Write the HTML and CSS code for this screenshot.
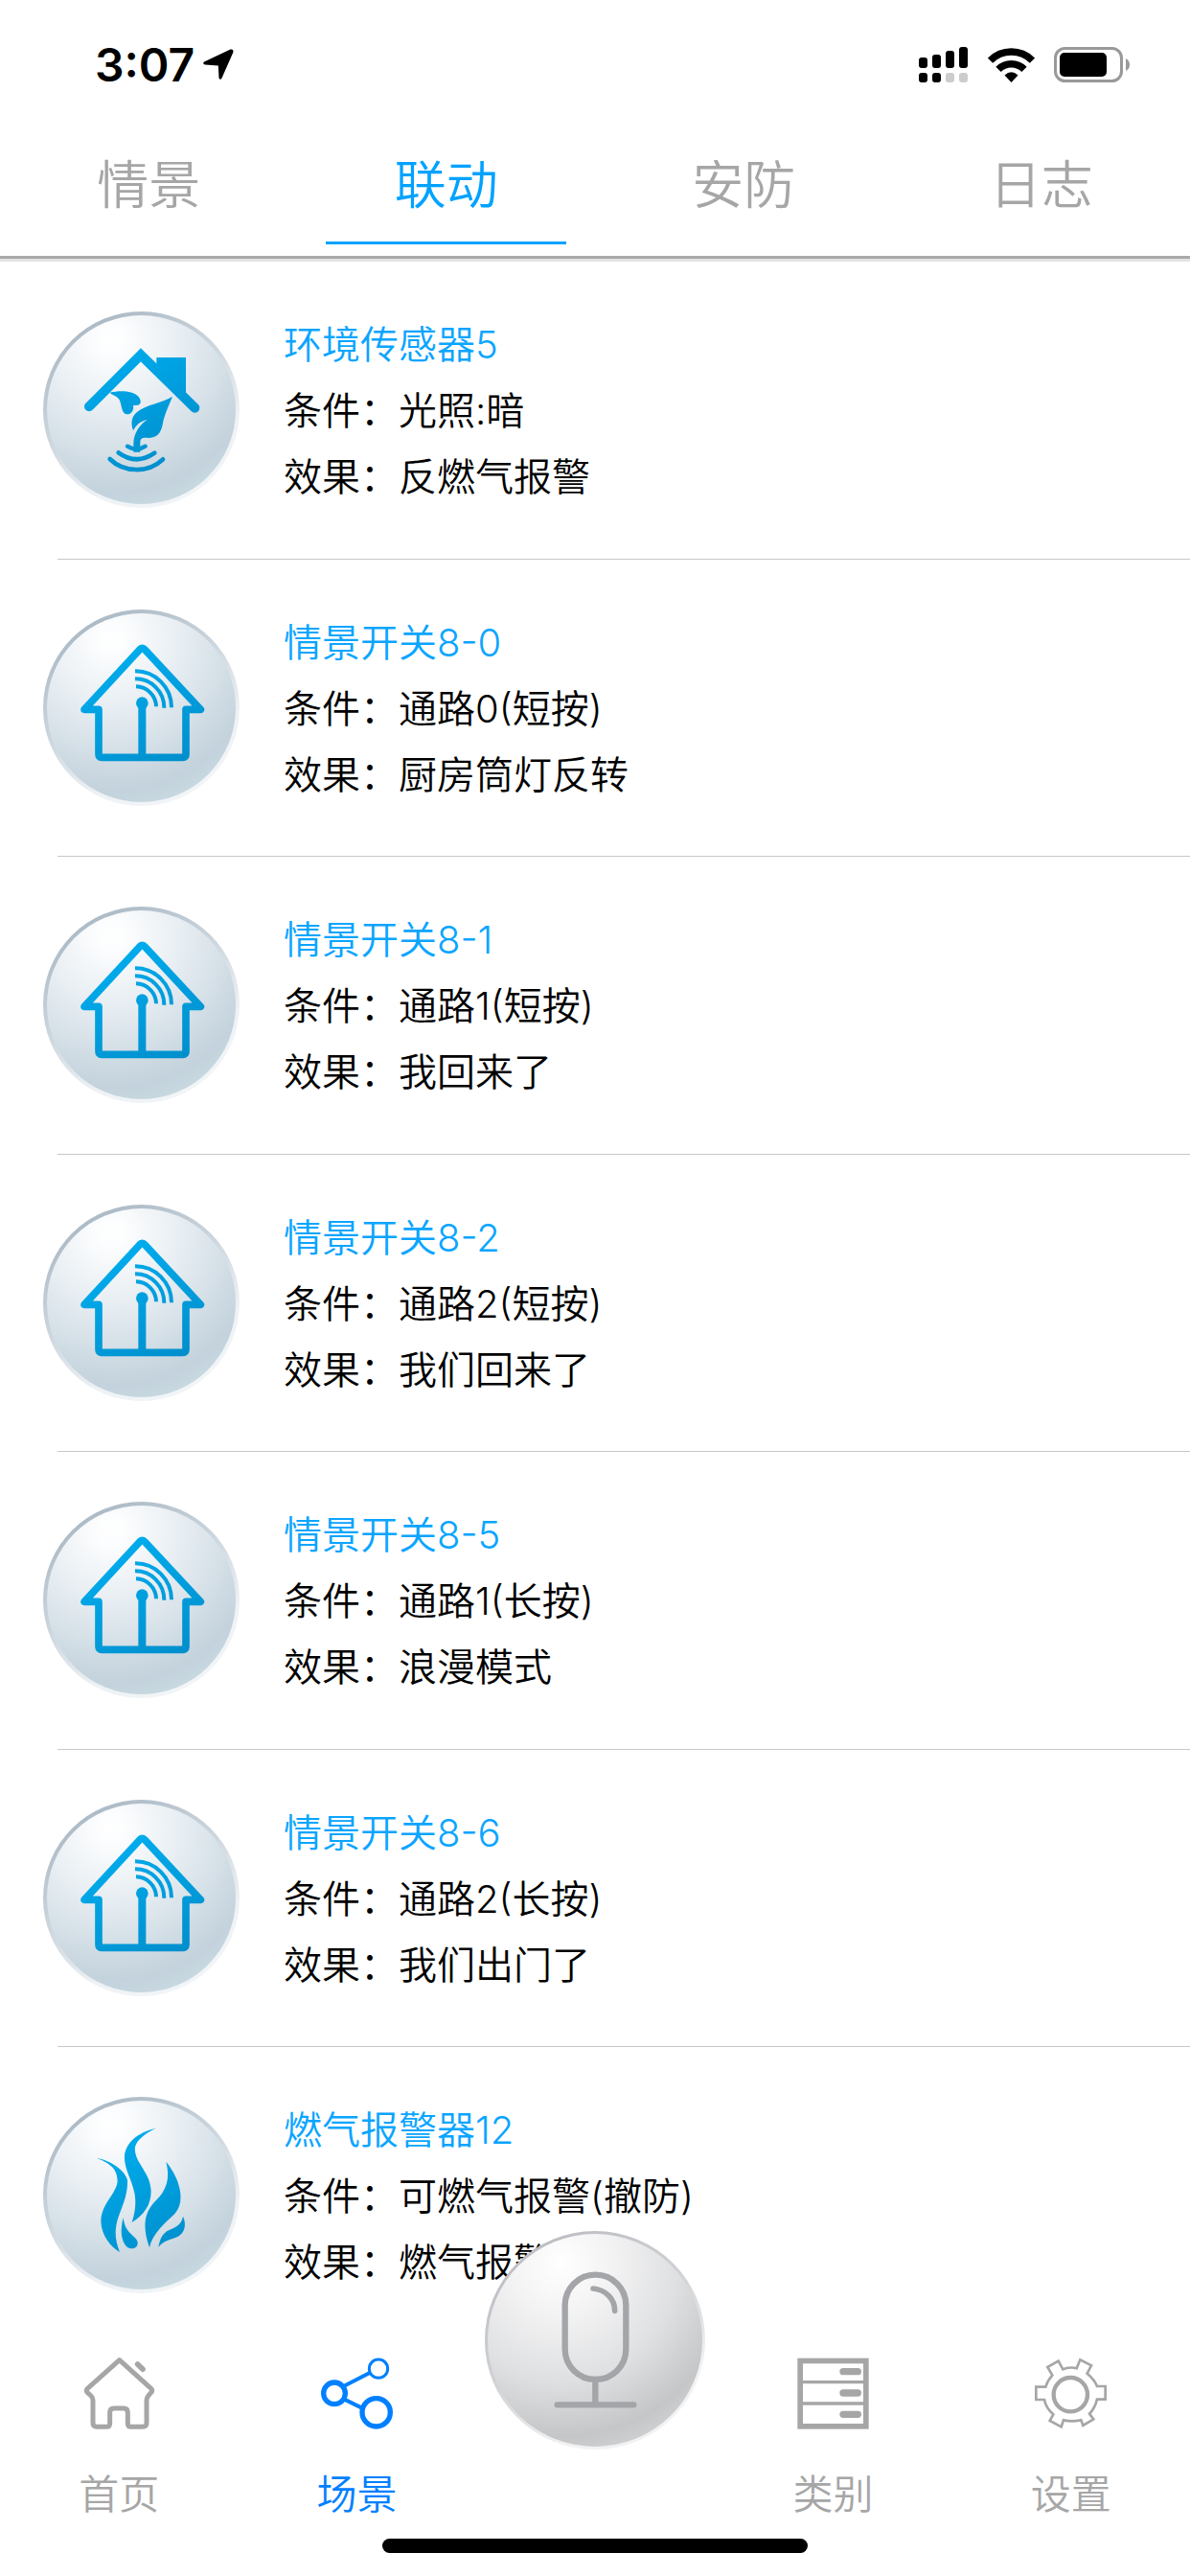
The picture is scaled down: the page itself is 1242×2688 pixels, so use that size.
FILE: index.html
```html
<!DOCTYPE html>
<html lang="zh-CN">
<head>
    <meta charset="UTF-8">
    <meta name="viewport" content="width=device-width, initial-scale=1.0">
    <title>场景</title>
    <link rel="stylesheet" href="styles.css">
</head>
<body>
    <!-- shared icons -->
    <svg class="defs" aria-hidden="true">
        <defs>
            <linearGradient id="blue" gradientUnits="userSpaceOnUse" x1="240" y1="180" x2="440" y2="540">
                <stop offset="0" stop-color="#00aeef"/>
                <stop offset="1" stop-color="#008fcd"/>
            </linearGradient>
        </defs>
        <symbol id="icon-sensor" viewBox="46 75 615 615">
            <g fill="none" stroke="url(#blue)" stroke-linecap="round">
                <path d="M190 373L352 211L521 377" stroke-width="30"/>
                <path d="M310 497Q338 515 366 497" stroke-width="13"/>
                <path d="M282 517Q338 558 395 518" stroke-width="14"/>
                <path d="M255 537C300 581 376 581 421 538" stroke-width="14"/>
            </g>
            <g fill="url(#blue)">
                <path d="M401 219H493V349L401 259Z"/>
                <path d="M255 329C285 322 326 322 345 342C359 361 348 373 328 368C332 385 320 398 308 397C291 395 293 370 285 352C279 339 262 337 255 329Z"/>
                <path d="M451 341C420 362 370 365 340 390C322 405 320 425 328 448C337 429 352 418 372 413C348 430 330 455 329 488V515H350V482C351 471 359 468 375 471C402 471 414 458 420 430C424 400 440 370 451 341Z"/>
            </g>
        </symbol>
        <symbol id="icon-switch" viewBox="46 45 615 615">
            <g fill="none" stroke="url(#blue)">
                <path d="M220 358H175L348 171Q356 161 365 171L539 358H493V498Q493 508 483 508H230Q220 508 220 498Z" stroke-width="23" stroke-linejoin="round"/>
                <path d="M356 338V508" stroke-width="24"/>
                <path d="M337 286A64 64 0 0 1 400 349" stroke-width="12"/>
                <path d="M334 262A90 90 0 0 1 425 353" stroke-width="12"/>
                <path d="M334 238A113 113 0 0 1 448 352" stroke-width="12"/>
            </g>
            <circle cx="356" cy="338" r="19" fill="url(#blue)"/>
        </symbol>
        <symbol id="icon-fire" viewBox="47 55 615 615">
            <g fill="url(#blue)">
                <path d="M400 154C340 166 299 205 302 250C306 310 358 348 325 448C362 425 385 395 385 350C384 290 330 260 335 212C341 188 370 168 400 154Z"/>
                <path d="M216 247C250 262 280 275 280 320C276 360 228 390 228 445C230 492 260 525 287 541C270 500 270 465 285 425C299 387 312 360 311 315C300 275 240 250 216 247Z"/>
                <path d="M298 433C288 470 290 507 310 525C329 537 345 525 343 510C340 490 303 485 298 433Z"/>
                <path d="M432 258C445 310 435 345 400 380C364 415 356 460 380 527C390 480 430 450 460 420C485 390 480 350 465 312C454 287 443 272 432 258Z"/>
                <path d="M485 429C480 460 455 465 435 475C415 490 413 505 408 525C430 500 450 502 470 492C490 480 497 455 485 429Z"/>
            </g>
        </symbol>
    </svg>

    <div class="app">
        <header class="header">
            <div class="status">
                <div class="clock">
                    <span>3:07</span>
                    <svg width="33" height="33" viewBox="0 0 33 33"><path d="M29.500.6Q33 0 32.400 3.500L20.500 30.500Q19 33 17.500 30.500L16.800 17.500L3 16.600Q0 15.500 2 13.500Z"/></svg>
                </div>
                <div class="system">
                    <svg width="52" height="38" viewBox="0 0 52 38">
                        <rect x="0" y="11" width="9" height="11" rx="3"/>
                        <rect x="14" y="8" width="9" height="14" rx="3"/>
                        <rect x="28" y="4" width="9" height="18" rx="3"/>
                        <rect x="42" y="0" width="9" height="22" rx="3"/>
                        <rect x="0" y="27" width="9" height="10" rx="3"/>
                        <rect x="14" y="27" width="9" height="10" rx="3"/>
                        <rect x="28" y="27" width="9" height="10" rx="3" fill="#ccc"/>
                        <rect x="42" y="27" width="9" height="10" rx="3" fill="#ccc"/>
                    </svg>
                    <svg width="49" height="36" viewBox="0 0 49 36">
                        <g fill="none" stroke="#000">
                            <path d="M2.500 13.200A31 31 0 0 1 46.500 13.200" stroke-width="7.500"/>
                            <path d="M11 22.300A19 19 0 0 1 38 22.300" stroke-width="7.500"/>
                        </g>
                        <path d="M24.500 36L17.500 28.500Q24.500 22 31.500 28.500Z"/>
                    </svg>
                    <svg width="80" height="38" viewBox="0 0 80 38">
                        <rect x="1.500" y="1.500" width="69" height="34" rx="10" fill="none" stroke="#999" stroke-width="3"/>
                        <rect x="6" y="6" width="49" height="25" rx="5"/>
                        <path d="M75 12Q79 14 79 18.500Q79 23 75 25Z" fill="#999"/>
                    </svg>
                </div>
            </div>
            <nav class="tabs">
                <a href="#">情景</a>
                <a href="#" class="active">联动</a>
                <a href="#">安防</a>
                <a href="#">日志</a>
            </nav>
        </header>

        <ul class="list">
            <li>
                <div class="ball"><svg><use href="#icon-sensor"/></svg></div>
                <div class="info">
                    <h2>环境传感器5</h2>
                    <p>条件：光照:暗</p>
                    <p>效果：反燃气报警</p>
                </div>
            </li>
            <li>
                <div class="ball"><svg><use href="#icon-switch"/></svg></div>
                <div class="info">
                    <h2>情景开关8-0</h2>
                    <p>条件：通路0(短按)</p>
                    <p>效果：厨房筒灯反转</p>
                </div>
            </li>
            <li>
                <div class="ball"><svg><use href="#icon-switch"/></svg></div>
                <div class="info">
                    <h2>情景开关8-1</h2>
                    <p>条件：通路1(短按)</p>
                    <p>效果：我回来了</p>
                </div>
            </li>
            <li>
                <div class="ball"><svg><use href="#icon-switch"/></svg></div>
                <div class="info">
                    <h2>情景开关8-2</h2>
                    <p>条件：通路2(短按)</p>
                    <p>效果：我们回来了</p>
                </div>
            </li>
            <li>
                <div class="ball"><svg><use href="#icon-switch"/></svg></div>
                <div class="info">
                    <h2>情景开关8-5</h2>
                    <p>条件：通路1(长按)</p>
                    <p>效果：浪漫模式</p>
                </div>
            </li>
            <li>
                <div class="ball"><svg><use href="#icon-switch"/></svg></div>
                <div class="info">
                    <h2>情景开关8-6</h2>
                    <p>条件：通路2(长按)</p>
                    <p>效果：我们出门了</p>
                </div>
            </li>
            <li>
                <div class="ball"><svg><use href="#icon-fire"/></svg></div>
                <div class="info">
                    <h2>燃气报警器12</h2>
                    <p>条件：可燃气报警(撤防)</p>
                    <p>效果：燃气报警</p>
                </div>
            </li>
        </ul>

        <footer class="footer">
            <nav class="menu">
                <a href="#">
                    <svg viewBox="258 180 225 225" fill="none" stroke="#a6a6a6" stroke-width="15" stroke-linejoin="round" stroke-linecap="round">
                        <path d="M371 188L271 277Q265 283 271 290L282 300Q288 306 288 314V385Q288 397 300 397H330Q341 397 341 386V352Q341 339 354 339H384Q397 339 397 352V386Q397 397 408 397H444Q456 397 456 385V314Q456 306 462 299L470 290Q476 283 470 277Z"/>
                        <path d="M428 201L444 217" stroke-width="17"/>
                    </svg>
                    <span>首页</span>
                </a>
                <a href="#" class="active">
                    <svg viewBox="1002 180 225 225" fill="none" stroke="#0080ff">
                        <path d="M1073 270L1156 227M1075 311L1130 338" stroke-width="12"/>
                        <circle cx="1182" cy="215" r="29" stroke-width="9"/>
                        <circle cx="1044" cy="292" r="34" stroke-width="16"/>
                        <circle cx="1175" cy="352" r="44" stroke-width="16"/>
                    </svg>
                    <span>场景</span>
                </a>
                <button type="button" class="mic" aria-label="语音">
                    <svg viewBox="46 84 690 684" fill="none" stroke="#a3a5a8" stroke-width="19" stroke-linecap="round">
                        <rect x="297" y="221" width="191" height="328" rx="95"/>
                        <path d="M385 264C425 268 453 297 453 334" stroke-width="17"/>
                        <path d="M392 549V628M273 628H512"/>
                    </svg>
                </button>
                <a href="#">
                    <svg viewBox="273 180 225 225" fill="none" stroke="#a6a6a6">
                        <rect x="282.500" y="190.500" width="206" height="205" stroke-width="17"/>
                        <path d="M290 257H482M290 324H482" stroke-width="10"/>
                        <path d="M417 224H463M417 291H463M417 358H463" stroke-width="22" stroke-linecap="round"/>
                    </svg>
                    <span>类别</span>
                </a>
                <a href="#">
                    <svg viewBox="1020 180 225 225" fill="none" stroke="#a6a6a6">
                        <circle cx="1132" cy="296" r="53" stroke-width="13"/>
                        <path d="M1108 217Q1129 208 1151 214L1162 187L1197 205L1184 230Q1207 249 1215 270H1241V311H1215Q1208 340 1191 356L1204 373L1171 393L1165 376Q1135 382 1110 376L1103 397L1067 378L1078 358Q1055 338 1050 312H1024V272H1054Q1060 252 1075 236L1060 210L1094 191Z" stroke-width="8"/>
                    </svg>
                    <span>设置</span>
                </a>
            </nav>
            <div class="home-bar"></div>
        </footer>
    </div>
</body>
</html>
```
FILE: styles.css
```css
* {
    box-sizing: border-box;
}
body {
    margin: 0;
    background-color: #fff;
    color: #000;
    font-family: Inter, "Noto Sans CJK SC", sans-serif;
    font-weight: 350;
}
a {
    color: #a6a6a6;
    text-decoration: none;
}
svg {
    display: block;
}
.defs {
    position: absolute;
    width: 0;
    height: 0;
}
.app {
    display: flex;
    flex-direction: column;
    height: 100vh;
    overflow: hidden;
}

/* header */
.header {
    border-bottom: 3px solid #a9a9a9;
    box-shadow: 0 3px 0 #e3e3e3;
}
.status {
    display: flex;
    justify-content: space-between;
    align-items: center;
    height: 135px;
    padding: 0 62px 0 99px;
}
.clock {
    display: flex;
    align-items: center;
    gap: 8px;
    font-size: 48px;
    font-weight: 600;
}
.system {
    display: flex;
    align-items: center;
    gap: 20px;
}
.tabs {
    display: grid;
    grid-template-columns: repeat(4, 1fr);
    justify-items: center;
    padding-bottom: 12px;
}
.tabs a {
    width: 251px;
    border-bottom: 3px solid transparent;
    font-size: 54px;
    line-height: 117px;
    text-align: center;
}
.tabs .active {
    color: #00a2ff;
    border-color: #00a2ff;
}

/* list */
.list {
    flex: 1;
    min-height: 0;
    margin: 3px 0 0;
    padding: 0;
    list-style: none;
}
.list li {
    display: flex;
    align-items: center;
    gap: 46px;
    min-height: 25vw;
    margin-left: 60px;
    border-bottom: 1px solid #c8c7cc;
}
.ball {
    width: 205px;
    height: 205px;
    margin-left: -15px;
    border: 4px solid transparent;
    border-radius: 50%;
    background:
        radial-gradient(circle 190px at 34% 13%, #fff 0, #fcfdfe 8%, #e5ecf1 42%, #c3d2dc 84%, #cbdde4 100%) padding-box,
        linear-gradient(150deg, #a9b8c4 10%, #c9d3db 40%, #eef2f5 70%, #f6f8fa) border-box;
}
.ball svg {
    width: 205px;
    height: 205px;
    margin: -4px;
}
.info {
    padding-top: 2px;
}
.info h2,
.info p {
    margin: 0;
    font-size: 40px;
    font-weight: 350;
    line-height: 69px;
}
.info h2 {
    color: #0aa5ff;
}

/* bottom menu */
.footer {
    position: relative;
    height: 249px;
    padding-bottom: 24px;
    background-color: #fff;
}
.menu {
    display: grid;
    grid-template-columns: repeat(5, 1fr);
    justify-items: center;
    height: 210px;
    font-size: 42px;
}
.menu a {
    display: flex;
    flex-direction: column;
    align-items: center;
    gap: 38px;
    padding-top: 21px;
    line-height: 60px;
}
.menu a svg {
    width: 75px;
    height: 75px;
}
.menu .active {
    color: #0080ff;
}
.mic {
    width: 230px;
    height: 228px;
    margin-top: -111px;
    padding: 0;
    border: 3px solid transparent;
    border-radius: 50%;
    background:
        radial-gradient(circle 210px at 34% 14%, #fff 0, #f3f3f4 25%, #dfe0e1 58%, #c5c6c8 86%, #d3d4d6 100%) padding-box,
        linear-gradient(150deg, #bcbdc2 10%, #d0d1d4 45%, #f2f2f3 75%) border-box;
}
.mic svg {
    width: 230px;
    height: 228px;
    margin: -3px;
}
.home-bar {
    width: 444px;
    height: 15px;
    margin: 0 auto;
    border-radius: 8px;
    background-color: #000;
}
```
